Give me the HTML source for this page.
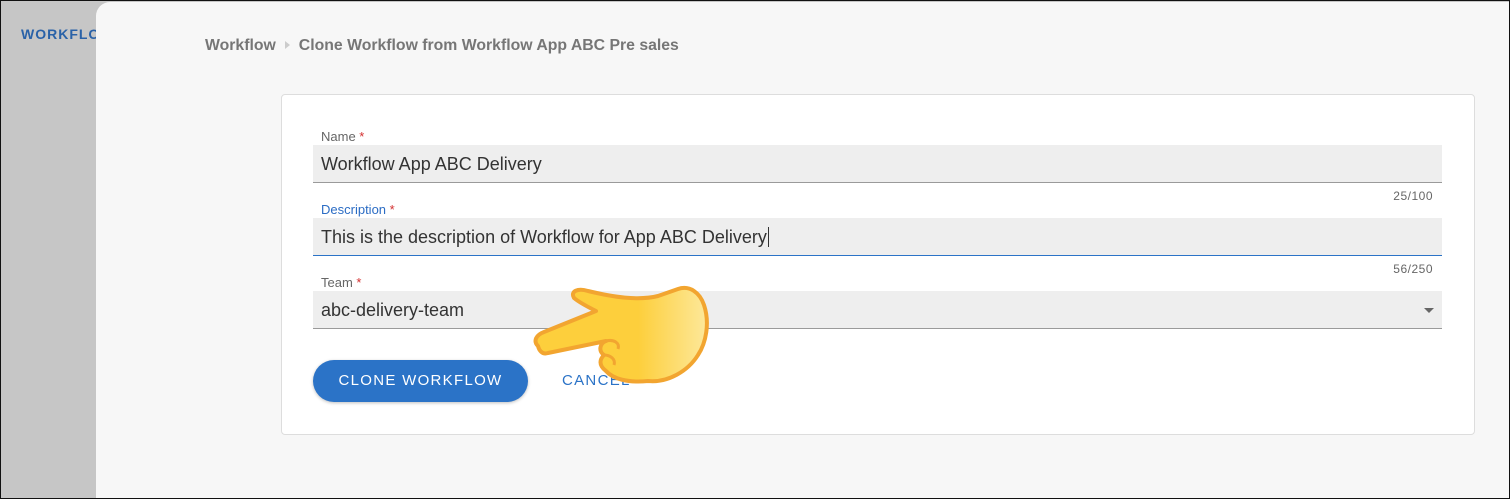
<!DOCTYPE html>
<html><head><style>
*{margin:0;padding:0;box-sizing:border-box}
body{width:1510px;height:499px;overflow:hidden;background:#c6c6c6;font-family:"Liberation Sans",Arial,sans-serif;position:relative}
.frame{position:absolute;inset:0;border:1px solid #111;pointer-events:none;z-index:10}
.side{position:absolute;left:21px;top:26px;color:#2a62a8;font-weight:bold;font-size:14px;letter-spacing:1px}
.main{position:absolute;left:96px;top:2px;right:1px;bottom:1px;background:#f7f7f7;border-top-left-radius:14px}
.bc{position:absolute;left:205px;top:37px;font-size:15.8px;font-weight:bold;color:#767676}
.bc .tri{display:inline-block;width:0;height:0;border-left:5px solid #ccc;border-top:4px solid transparent;border-bottom:4px solid transparent;margin:0 9px 1px 9px}
.card{position:absolute;left:281px;top:94px;width:1194px;height:341px;background:#fff;border:1px solid #ddd;border-radius:4px}
.lbl{position:absolute;left:321px;font-size:13px;color:#666}
.lbl span{color:#d32f2f}
.inp{position:absolute;left:313px;width:1129px;height:38px;background:#eee;border-bottom:1px solid #9a9a9a;font-size:18px;color:#333;padding:9px 8px}
.cnt{position:absolute;right:77px;font-size:12px;color:#666;letter-spacing:.5px}
.btn{position:absolute;left:313px;top:360px;width:215px;height:42px;background:#2b73c7;border-radius:21px;color:#fff;font-size:15px;letter-spacing:1.3px;text-align:center;line-height:42px;box-shadow:0 1px 3px rgba(0,0,0,.25)}
.cancel{position:absolute;left:562px;top:372px;font-size:15px;letter-spacing:1.3px;color:#2b73c7}
</style></head><body>
<div class="side">WORKFLOW</div>
<div class="main"></div>
<div class="bc">Workflow<span class="tri"></span>Clone Workflow from Workflow App ABC Pre sales</div>
<div class="card"></div>
<div class="lbl" style="top:129px">Name <span>*</span></div>
<div class="inp" style="top:145px">Workflow App ABC Delivery</div>
<div class="cnt" style="top:189px">25/100</div>
<div class="lbl" style="top:202px;color:#2b6cc4">Description <span>*</span></div>
<div class="inp" style="top:218px;border-bottom:1px solid #2b73c7">This is the description of Workflow for App ABC Delivery<span style="border-left:1px solid #333;margin-left:1px"></span></div>
<div class="cnt" style="top:262px">56/250</div>
<div class="lbl" style="top:275px">Team <span>*</span></div>
<div class="inp" style="top:291px">abc-delivery-team</div>
<div style="position:absolute;left:1424px;top:308px;width:0;height:0;border-top:5px solid #666;border-left:5px solid transparent;border-right:5px solid transparent"></div>
<div class="btn">CLONE WORKFLOW</div>
<div class="cancel">CANCEL</div>
<svg style="position:absolute;left:528px;top:283px" width="185" height="105" viewBox="0 0 185 105">
<defs><linearGradient id="g" x1="0" x2="1"><stop offset="0.6" stop-color="#fdcf3c"/><stop offset="1" stop-color="#fde89a"/></linearGradient></defs>
<path d="M10 63 C5 58 8 52 16 49 L68 28 C60 24 52 20 46 15 C42 8 50 5 60 8 C85 14 110 18 130 13 L150 6 C162 2 172 10 176 22 C182 40 178 60 170 72 C160 88 140 100 120 98 C100 100 85 96 78 88 C70 82 72 76 76 72 C70 68 72 60 78 58 L20 70 C14 72 11 67 10 63 Z" fill="url(#g)" stroke="#f2a530" stroke-width="4" stroke-linejoin="round"/>
<path d="M78 58 C86 56 92 60 90 66 M76 72 C82 72 88 76 86 82" fill="none" stroke="#f2a530" stroke-width="3"/>
</svg>
<div class="frame"></div>
</body></html>
